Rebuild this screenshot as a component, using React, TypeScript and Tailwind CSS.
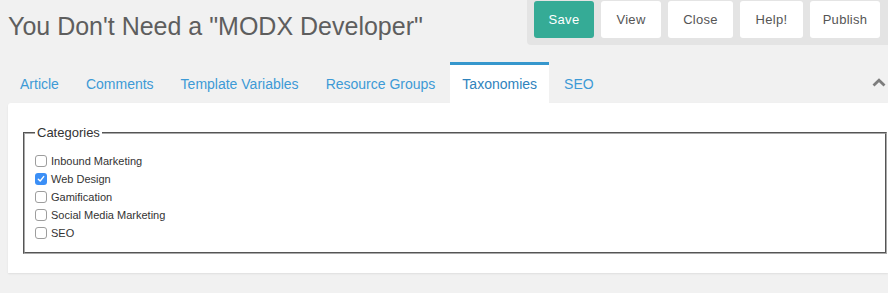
import { useState } from "react";

const TABS = ["Article", "Comments", "Template Variables", "Resource Groups", "Taxonomies", "SEO"];

const BUTTONS = [
  { label: "View", w: "w-[60px]" },
  { label: "Close", w: "w-[65px]" },
  { label: "Help!", w: "w-[63px]" },
  { label: "Publish", w: "w-[70px]" },
];

const CATEGORIES = [
  { id: 1, name: "Inbound Marketing", checked: false },
  { id: 2, name: "Web Design", checked: true },
  { id: 3, name: "Gamification", checked: false },
  { id: 4, name: "Social Media Marketing", checked: false },
  { id: 5, name: "SEO", checked: false },
];

function Checkbox({ checked }: { checked: boolean }) {
  if (checked) {
    return (
      <span className="flex h-[12px] w-[12px] items-center justify-center rounded-[3px] bg-[#3b8ff6]">
        <svg width="8" height="8" viewBox="0 0 8 8">
          <path d="M1.3 4.2 L3.2 6 L6.7 1.6" stroke="#fff" strokeWidth="1.4" fill="none" strokeLinecap="round" strokeLinejoin="round" />
        </svg>
      </span>
    );
  }
  return <span className="block h-[12px] w-[12px] rounded-[3px] border border-[#9d9d9d] bg-white" />;
}

export default function App() {
  const [active, setActive] = useState("Taxonomies");
  const [cats, setCats] = useState(CATEGORIES);

  return (
    <div className="min-h-screen w-full overflow-hidden bg-[#f1f1f1] font-['Liberation_Sans',Arial,sans-serif]">
      {/* Header */}
      <div className="flex items-start justify-between">
        <h1 className="pl-2 pt-[11px] text-[25px] leading-[30px] font-normal text-[#5e5e5e]">
          You Don't Need a "MODX Developer"
        </h1>
        <div className="flex gap-[7px] rounded-bl-[4px] bg-[#e4e4e4] pt-[1px] pr-2 pb-[7px] pl-[7px]">
          <button className="h-[37px] w-[60px] rounded-[3px] bg-[#35ab96] text-[13px] tracking-[0.3px] text-white">
            Save
          </button>
          {BUTTONS.map((b) => (
            <button
              key={b.label}
              className={`h-[37px] ${b.w} rounded-[3px] bg-white text-[13px] tracking-[0.3px] text-[#555]`}
            >
              {b.label}
            </button>
          ))}
        </div>
      </div>

      {/* Tabs */}
      <div className="mt-[17px] flex items-start justify-between pl-2">
        <div className="flex gap-[3px]">
          {TABS.map((tab) => (
            <button
              key={tab}
              onClick={() => setActive(tab)}
              className={
                tab === active
                  ? "h-[41px] border-t-[3px] border-[#3697cd] bg-white px-3 text-[14px] leading-[38px] text-[#2f83bd]"
                  : "h-[41px] border-t-[3px] border-transparent px-3 text-[14px] leading-[38px] text-[#3d9ad6]"
              }
            >
              {tab}
            </button>
          ))}
        </div>
        <svg className="mt-[16px] mr-[2px]" width="14" height="9" viewBox="0 0 14 9">
          <path d="M1.5 7.5 L7 2.2 L12.5 7.5" stroke="#7d7d7d" strokeWidth="2.8" fill="none" />
        </svg>
      </div>

      {/* Panel */}
      <div className="ml-2 rounded-tl-[3px] bg-white pt-[22px] pb-[19px] pl-[15px] pr-[1px] shadow-[0_1px_2px_rgba(0,0,0,0.08)]">
        <fieldset className="border-2 border-[#a9a9a9] [border-style:groove] px-[10px] pt-3 pb-[10px]">
          <legend className="px-[2px] text-[13px] leading-[15px] text-[#333]">Categories</legend>
          {cats.map((c) => (
            <label
              key={c.id}
              className="flex h-[18px] cursor-pointer items-center gap-[4px] text-[11px] text-[#333]"
              onClick={() =>
                setCats((prev) => prev.map((p) => (p.id === c.id ? { ...p, checked: !p.checked } : p)))
              }
            >
              <Checkbox checked={c.checked} />
              {c.name}
            </label>
          ))}
        </fieldset>
      </div>
    </div>
  );
}
